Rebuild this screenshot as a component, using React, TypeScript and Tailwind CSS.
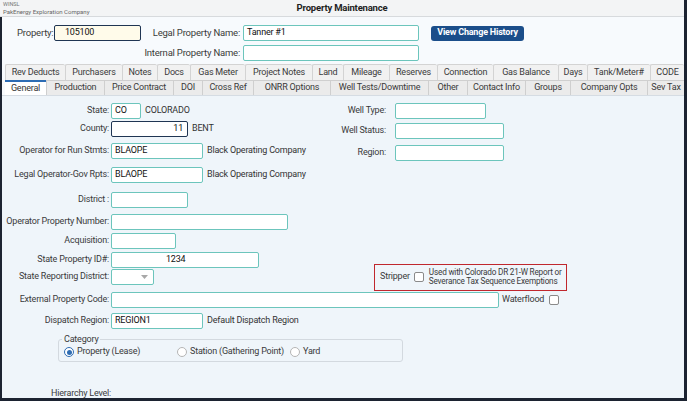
import React from "react";

const row1: [string, string][] = [
  ["Rev Deducts", "w-[60px]"],
  ["Purchasers", "w-[57px]"],
  ["Notes", "w-[35px]"],
  ["Docs", "w-[33px]"],
  ["Gas Meter", "w-[55px]"],
  ["Project Notes", "w-[67px]"],
  ["Land", "w-[31px]"],
  ["Mileage", "w-[46px]"],
  ["Reserves", "w-[48px]"],
  ["Connection", "w-[56px]"],
  ["Gas Balance", "w-[65px]"],
  ["Days", "w-[29px]"],
  ["Tank/Meter#", "w-[63px]"],
  ["CODE", "w-[34px]"],
];

const row2: [string, string][] = [
  ["General", "w-[41px]"],
  ["Production", "w-[58px]"],
  ["Price Contract", "w-[69px]"],
  ["DOI", "w-[29px]"],
  ["Cross Ref", "w-[51px]"],
  ["ONRR Options", "w-[77px]"],
  ["Well Tests/Downtime", "w-[98px]"],
  ["Other", "w-[39px]"],
  ["Contact Info", "w-[58px]"],
  ["Groups", "w-[45px]"],
  ["Company Opts", "w-[77px]"],
  ["Sev Tax", "w-[37px]"],
];

function Box({ w, children, cls = "" }: { w: string; children?: React.ReactNode; cls?: string }) {
  return (
    <div
      className={`${w} h-[16px] shrink-0 bg-white border border-[#6cc5bc] rounded-[2px] flex items-center px-[3px] text-[9px] text-[#111] whitespace-nowrap ${cls}`}
    >
      {children}
    </div>
  );
}

function Label({ children }: { children: React.ReactNode }) {
  return (
    <div className="w-[109px] shrink-0 text-right pr-[2px] text-[9px] text-[#3a3a3a] whitespace-nowrap">{children}</div>
  );
}

function Check() {
  return <div className="w-[10px] h-[10px] bg-white border border-[#8a8a8a] rounded-[2px] shrink-0" />;
}

function Radio({ on }: { on?: boolean }) {
  return on ? (
    <div className="w-[10px] h-[10px] rounded-full border border-[#2f6db3] bg-white flex items-center justify-center shrink-0">
      <div className="w-[5px] h-[5px] rounded-full bg-[#2f6db3]" />
    </div>
  ) : (
    <div className="w-[10px] h-[10px] rounded-full border border-[#b5b5b5] bg-white shrink-0" />
  );
}

export default function App() {
  return (
    <div className="w-[687px] h-[401px] bg-[#1c2331] overflow-hidden flex flex-col font-['Roboto',sans-serif] tracking-[-0.2px] text-[#333]">
      {/* title bar */}
      <div className="h-[17px] mr-[3px] bg-[#f3f4f5] border-b border-[#d7dadd] relative shrink-0">
        <div className="absolute left-[3px] top-[1px] text-[5.5px] leading-[6px] tracking-normal text-[#777]">WINSL</div>
        <div className="absolute left-[3px] top-[8px] text-[6px] leading-[7px] tracking-normal text-[#666]">
          PakEnergy Exploration Company
        </div>
        <div className="text-center text-[9.5px] leading-[16px] font-bold text-[#1e1e1e]">Property Maintenance</div>
      </div>

      <div className="flex-1 ml-[2px] mr-[3px] mb-[3px] flex flex-col bg-[#f7fafd]">
        {/* header */}
        <div className="h-[45px] shrink-0">
          <div className="mt-[8px] h-[16px] flex items-center">
            <div className="pl-[15px] w-[52px] shrink-0 text-[9.5px] text-[#3a3a3a] whitespace-nowrap">Property:</div>
            <div className="w-[87px] h-[16px] shrink-0 bg-[#fffbea] border-[1.5px] border-[#1f3553] rounded-[2px] flex items-center pl-[10px] text-[9px] text-[#111]">
              105100
            </div>
            <div className="w-[102px] shrink-0 text-right pr-[3px] text-[9.5px] text-[#3a3a3a] whitespace-nowrap">
              Legal Property Name:
            </div>
            <Box w="w-[176px]">Tanner #1</Box>
            <div className="ml-[12px] w-[93px] h-[15px] shrink-0 rounded-[3px] bg-[#1b4e8a] text-white text-[9px] font-bold flex items-center justify-center whitespace-nowrap">
              View Change History
            </div>
          </div>
          <div className="mt-[4px] h-[16px] flex items-center">
            <div className="w-[241px] shrink-0 text-right pr-[3px] text-[9.5px] text-[#3a3a3a] whitespace-nowrap">
              Internal Property Name:
            </div>
            <Box w="w-[176px]" />
          </div>
        </div>

        {/* tabs */}
        <div className="h-[34px] shrink-0 pt-[2px] pl-[3px] border-b border-[#d5dce3]">
          <div className="flex h-[16px]">
            {row1.map(([t, w]) => (
              <div
                key={t}
                className={`${w} h-[16px] shrink-0 bg-[#f1f1f1] border-l border-t border-[#d3d3d3] rounded-t-[2px] flex items-center justify-center text-[9px] text-[#3a3a3a] whitespace-nowrap`}
              >
                {t}
              </div>
            ))}
          </div>
          <div className="flex h-[15px]">
            {row2.map(([t, w], i) => (
              <div
                key={t}
                className={
                  i === 0
                    ? `${w} h-[15px] shrink-0 bg-white border-t-2 border-[#2c6cb4] flex items-center justify-center text-[9px] text-[#333] whitespace-nowrap`
                    : `${w} h-[15px] shrink-0 bg-[#ebebeb] border-l border-t border-[#cfcfcf] flex items-center justify-center text-[9px] text-[#3a3a3a] whitespace-nowrap`
                }
              >
                {t}
              </div>
            ))}
          </div>
        </div>

        {/* content */}
        <div className="flex-1 bg-[#eff5fa] pt-[7px]">
          <div className="flex">
            <div className="w-[310px] shrink-0">
              <div className="h-[16px] flex items-center">
                <Label>State:</Label>
                <Box w="w-[30px]">CO</Box>
                <div className="ml-[4px] text-[9px] text-[#333] whitespace-nowrap">COLORADO</div>
              </div>
              <div className="mt-[2px] h-[16px] flex items-center">
                <Label>County:</Label>
                <div className="w-[77px] h-[16px] shrink-0 bg-white border-[1.5px] border-[#1f3553] rounded-[2px] flex items-center justify-end pr-[4px] text-[9px] text-[#111]">
                  11
                </div>
                <div className="ml-[4px] text-[9px] text-[#333] whitespace-nowrap">BENT</div>
              </div>
              <div className="mt-[6px] h-[16px] flex items-center">
                <Label>Operator for Run Stmts:</Label>
                <Box w="w-[92px]">BLAOPE</Box>
                <div className="ml-[4px] text-[9px] text-[#333] whitespace-nowrap">Black Operating Company</div>
              </div>
              <div className="mt-[8px] h-[16px] flex items-center">
                <Label>Legal Operator-Gov Rpts:</Label>
                <Box w="w-[92px]">BLAOPE</Box>
                <div className="ml-[4px] text-[9px] text-[#333] whitespace-nowrap">Black Operating Company</div>
              </div>
              <div className="mt-[9px] h-[16px] flex items-center">
                <Label>District :</Label>
                <Box w="w-[77px]" />
              </div>
            </div>
            <div>
              <div className="h-[15px] flex items-center">
                <div className="w-[74px] text-right text-[9px] text-[#3a3a3a] whitespace-nowrap">Well Type:</div>
                <Box w="w-[91px]" cls="ml-[9px] h-[15px]" />
              </div>
              <div className="mt-[5px] h-[16px] flex items-center">
                <div className="w-[74px] text-right text-[9px] text-[#3a3a3a] whitespace-nowrap">Well Status:</div>
                <Box w="w-[109px]" cls="ml-[9px]" />
              </div>
              <div className="mt-[6px] h-[16px] flex items-center">
                <div className="w-[74px] text-right text-[9px] text-[#3a3a3a] whitespace-nowrap">Region:</div>
                <Box w="w-[109px]" cls="ml-[9px]" />
              </div>
            </div>
          </div>

          <div className="mt-[6px] h-[16px] flex items-center">
            <Label>Operator Property Number:</Label>
            <Box w="w-[177px]" />
          </div>
          <div className="mt-[3px] h-[16px] flex items-center">
            <Label>Acquisition:</Label>
            <Box w="w-[65px]" />
          </div>
          <div className="mt-[3px] h-[16px] flex items-center">
            <Label>State Property ID#:</Label>
            <Box w="w-[148px]" cls="pl-[54px]">1234</Box>
          </div>
          <div className="mt-[1px] h-[16px] flex items-center">
            <Label>State Reporting District:</Label>
            <div className="w-[43px] h-[16px] shrink-0 bg-white border border-[#6cc5bc] rounded-[2px] flex items-center justify-end pr-[5px]">
              <svg width="7" height="4" viewBox="0 0 7 4">
                <path d="M0 0 L7 0 L3.5 4 Z" fill="#a8a8a8" />
              </svg>
            </div>
            <div className="ml-[220px] w-[193px] h-[27px] shrink-0 border-[1.5px] border-[#c0272d] flex items-center pl-[5px]">
              <div className="text-[9px] text-[#3a3a3a]">Stripper</div>
              <div className="ml-[4px]">
                <Check />
              </div>
              <div className="ml-[5px] text-[8.2px] leading-[9.5px] text-[#3a3a3a] whitespace-nowrap">
                <div>Used with Colorado DR 21-W Report or</div>
                <div>Severance Tax Sequence Exemptions</div>
              </div>
            </div>
          </div>
          <div className="mt-[7px] h-[16px] flex items-center">
            <Label>External Property Code:</Label>
            <Box w="w-[388px]" />
            <div className="ml-[3px] text-[9px] text-[#3a3a3a] whitespace-nowrap">Waterflood</div>
            <div className="ml-[5px]">
              <Check />
            </div>
          </div>
          <div className="mt-[5px] h-[16px] flex items-center">
            <Label>Dispatch Region:</Label>
            <Box w="w-[92px]">REGION1</Box>
            <div className="ml-[4px] text-[9px] text-[#333] whitespace-nowrap">Default Dispatch Region</div>
          </div>

          <fieldset className="mt-[5px] ml-[56px] w-[345px] border border-[#d3d9df] rounded-[3px] px-[5px] pb-[3px] pt-0">
            <legend className="ml-[-2px] px-[2px] text-[9px] leading-[10px] text-[#3a3a3a]">Category</legend>
            <div className="h-[12px] mt-[2px] flex items-center text-[9px] text-[#3a3a3a] whitespace-nowrap">
              <div className="w-[113px] shrink-0 flex items-center">
                <Radio on />
                <span className="ml-[3px]">Property (Lease)</span>
              </div>
              <div className="w-[113px] shrink-0 flex items-center">
                <Radio />
                <span className="ml-[3px]">Station (Gathering Point)</span>
              </div>
              <div className="flex items-center">
                <Radio />
                <span className="ml-[3px]">Yard</span>
              </div>
            </div>
          </fieldset>

          <div className="mt-[26px] ml-[49px] text-[9px] leading-[10px] text-[#3a3a3a]">Hierarchy Level:</div>
        </div>
      </div>
    </div>
  );
}
